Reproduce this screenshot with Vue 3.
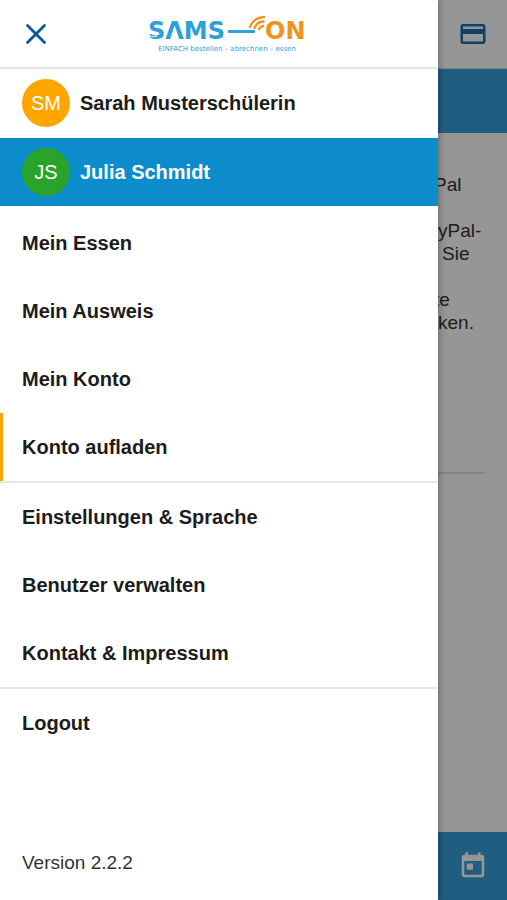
<script setup>
const users = [
  { initials: 'SM', name: 'Sarah Musterschülerin', tone: 'orange', active: false },
  { initials: 'JS', name: 'Julia Schmidt', tone: 'green', active: true },
]

const groups = [
  [
    { label: 'Mein Essen' },
    { label: 'Mein Ausweis' },
    { label: 'Mein Konto' },
    { label: 'Konto aufladen', current: true },
  ],
  [
    { label: 'Einstellungen & Sprache' },
    { label: 'Benutzer verwalten' },
    { label: 'Kontakt & Impressum' },
  ],
  [{ label: 'Logout' }],
]
</script>

<template>
  <div class="app">
    <div class="page">
      <header class="page-bar">
        <button class="icon-button card-button" type="button" aria-label="Konto">
          <svg viewBox="0 0 24 24" width="30" height="30" aria-hidden="true">
            <path
              fill="currentColor"
              d="M20 4H4c-1.11 0-1.99.89-1.99 2L2 18c0 1.11.89 2 2 2h16c1.11 0 2-.89 2-2V6c0-1.11-.89-2-2-2zm0 14H4v-6h16v6zm0-10H4V6h16v2z"
            />
          </svg>
        </button>
      </header>
      <div class="page-title"></div>
      <main class="page-body">
        <p><span class="outdent">Pal</span></p>
        <p><span>yPal-</span><span class="indent">Sie</span></p>
        <p><span class="outdent">te</span><span>ken.</span></p>
        <hr />
      </main>
      <footer class="page-footer">
        <button class="icon-button calendar-button" type="button" aria-label="Kalender">
          <svg viewBox="0 0 24 24" width="30" height="30" aria-hidden="true">
            <path
              fill="currentColor"
              d="M19 3h-1V1h-2v2H8V1H6v2H5c-1.11 0-1.99.9-1.99 2L3 19c0 1.1.89 2 2 2h14c1.1 0 2-.9 2-2V5c0-1.1-.9-2-2-2zm0 16H5V8h14v11zM7 10h5v5H7z"
            />
          </svg>
        </button>
      </footer>
    </div>

    <div class="backdrop"></div>

    <aside class="drawer">
      <header class="drawer-bar">
        <button class="icon-button close-button" type="button" aria-label="Menü schließen">
          <svg viewBox="0 0 24 24" width="24" height="24" aria-hidden="true">
            <path
              d="M3.5 3.5l17 17M20.5 3.5l-17 17"
              fill="none"
              stroke="currentColor"
              stroke-width="2.8"
              stroke-linecap="round"
            />
          </svg>
        </button>
        <div class="brand">
          <svg class="wordmark" viewBox="0 0 158 30" width="158" height="30">
            <text class="word blue" x="0" y="24">SΛMS</text>
            <rect x="80" y="15" width="27" height="3" rx="1" fill="#2d9fd9" />
            <text class="word amber" x="117" y="24">ON</text>
            <path d="M0 21.5h9M6 11h7" fill="none" stroke="#fff" stroke-width="0.8" />
            <g fill="none" stroke="#f0941f" stroke-width="2.4" stroke-linecap="round">
              <path d="M102 12A15 15 0 0 1 116 2" />
              <path d="M106.500 13A10 10 0 0 1 115.500 6.500" />
              <path d="M111 14A6 6 0 0 1 115 11" />
            </g>
          </svg>
          <span class="tagline">EINFACH bestellen – abrechnen – essen</span>
        </div>
      </header>

      <div class="users">
        <button
          v-for="user in users"
          :key="user.initials"
          type="button"
          class="user"
          :class="{ active: user.active }"
        >
          <span class="avatar" :class="user.tone">{{ user.initials }}</span>
          <span>{{ user.name }}</span>
        </button>
      </div>

      <nav class="menu">
        <ul v-for="(group, index) in groups" :key="index" class="group">
          <li v-for="item in group" :key="item.label">
            <a href="#" class="item" :class="{ current: item.current }">{{ item.label }}</a>
          </li>
        </ul>
      </nav>

      <p class="version">Version 2.2.2</p>
    </aside>
  </div>
</template>

<style>
body {
  margin: 0;
}
</style>

<style scoped>
.app {
  --drawer-width: 86.4%;
  position: relative;
  min-height: 100vh;
  overflow: hidden;
  font-family: 'Liberation Sans', Arial, sans-serif;
  font-size: 19px;
  color: #1c1c1c;
}

.icon-button {
  display: flex;
  padding: 0;
  border: 0;
  background: none;
}

.page {
  display: flex;
  flex-direction: column;
  min-height: 100vh;
  background: #fafafa;
}

.page-bar,
.page-footer {
  display: flex;
  align-items: center;
  justify-content: flex-end;
  height: 68px;
  padding: 0 19px;
}

.page-bar {
  border-bottom: 1px solid #e2e2e2;
}

.card-button {
  color: #1c6cab;
}

.page-title {
  height: 64px;
  background: #389bd5;
}

.page-body {
  flex: 1;
  padding: 40px 22px 0 var(--drawer-width);
  line-height: 23px;
  color: #333;
}

.page-body p {
  margin: 0 0 23px;
}

.page-body span {
  display: block;
}

.page-body .outdent {
  margin-left: -4px;
}

.page-body .indent {
  margin-left: 4px;
}

.page-body hr {
  height: 2px;
  margin: 138px 0 0;
  border: 0;
  background: #dcdcdc;
}

.page-footer {
  background: #389bd5;
}

.calendar-button {
  color: #fafafa;
}

.backdrop {
  position: absolute;
  inset: 0;
  background: rgba(0, 0, 0, 0.4);
}

.drawer {
  position: absolute;
  inset: 0 auto 0 0;
  display: flex;
  flex-direction: column;
  width: var(--drawer-width);
  background: #fff;
  box-shadow: 0 0 8px rgba(0, 0, 0, 0.4);
}

.drawer-bar {
  display: grid;
  grid-template-columns: 1fr auto 1fr;
  align-items: center;
  height: 67px;
  padding: 0 8px 0 24px;
  border-bottom: 2px solid #e4e4e4;
}

.close-button {
  color: #0b57a0;
}

.brand {
  display: flex;
  flex-direction: column;
  align-items: center;
}

.wordmark {
  display: block;
}

.word {
  font-family: 'DejaVu Sans', sans-serif;
  font-size: 24px;
  font-weight: 700;
}

.blue {
  fill: #2d9fd9;
}

.amber {
  fill: #f0941f;
}

.tagline {
  font-family: 'DejaVu Sans', sans-serif;
  font-size: 7px;
  line-height: 8px;
  white-space: nowrap;
  color: #2d9fd9;
}

.users {
  display: flex;
  flex-direction: column;
  gap: 1px;
}

.user {
  display: flex;
  align-items: center;
  gap: 10px;
  height: 68px;
  padding: 0 22px;
  border: 0;
  background: none;
  font: inherit;
  font-size: 20px;
  font-weight: 700;
  color: inherit;
}

.user.active {
  background: #0d8ccc;
  color: #fff;
}

.avatar {
  display: flex;
  align-items: center;
  justify-content: center;
  width: 48px;
  height: 48px;
  border-radius: 50%;
  font-weight: 400;
  color: #fff;
}

.avatar.orange {
  background: #ffa500;
}

.avatar.green {
  background: #29a329;
}

.menu {
  padding-top: 3px;
}

.group {
  margin: 0;
  padding: 0;
  list-style: none;
}

.group + .group {
  border-top: 2px solid #e8e8e8;
}

.item {
  display: flex;
  align-items: center;
  height: 68px;
  padding: 0 22px;
  font-size: 20px;
  font-weight: 700;
  color: inherit;
  text-decoration: none;
}

.item.current {
  box-shadow: inset 3px 0 #ffa500;
}

.version {
  margin: auto 0 0;
  padding: 0 22px 26px;
  line-height: 23px;
  color: #333;
}
</style>
